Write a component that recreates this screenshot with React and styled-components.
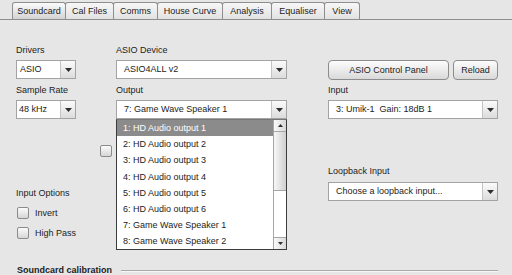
import React from 'react';
import styled, { createGlobalStyle } from 'styled-components';

const GlobalStyle = createGlobalStyle`
  html, body {
    margin: 0;
    padding: 0;
    background: #e6e6e6;
    overflow: hidden;
  }
  body {
    font-family: "Liberation Sans", Arial, sans-serif;
    font-size: 9px;
    color: #1c1c1c;
  }
`;

const Window = styled.div`
  width: 512px;
  height: 275px;
  background: #e6e6e6;
  overflow: hidden;
`;

const TabBar = styled.div`
  display: flex;
  align-items: flex-end;
  height: 17px;
  padding: 2px 0 0 12px;
  border-bottom: 1px solid #8e8e8e;
`;

const Tab = styled.div`
  box-sizing: border-box;
  width: ${p => p.$w}px;
  height: 17px;
  margin-right: -1px;
  border: 1px solid #8e8e8e;
  border-bottom: none;
  border-radius: 3px 3px 0 0;
  background: ${p => p.$active
    ? 'linear-gradient(#fbfbfb, #d3d3d3)'
    : 'linear-gradient(#f7f7f7, #e2e2e2)'};
  line-height: 16px;
  text-align: center;
  white-space: nowrap;
`;

const Panel = styled.div`
  padding: 0 14px 0 16px;
`;

const TopGrid = styled.div`
  display: grid;
  grid-template-columns: 100px 212px 170px;
  grid-template-rows: 11px 21px 11px 19px;
  row-gap: 4px;
  margin-top: 25px;
`;

const Label = styled.div`
  line-height: 11px;
  white-space: nowrap;
`;

const ComboBox = styled.div`
  box-sizing: border-box;
  position: relative;
  display: flex;
  width: ${p => p.$w}px;
  height: 19px;
  border: 1px solid #a3a3a3;
  background: #fff;
`;

const ComboText = styled.div`
  flex: 1;
  padding-left: ${p => p.$pad}px;
  line-height: 17px;
  white-space: pre;
  overflow: hidden;
`;

const ArrowBox = styled.div`
  display: flex;
  align-items: center;
  justify-content: center;
  width: 14px;
  border-left: 1px solid #c4c4c4;
  background: linear-gradient(#fbfbfb, #dcdcdc);
`;

const ButtonRow = styled.div`
  display: flex;
  gap: 4px;
`;

const Button = styled.div`
  box-sizing: border-box;
  width: ${p => p.$w}px;
  height: 20px;
  border: 1px solid #8c8c8c;
  border-radius: 4px;
  background: linear-gradient(#fdfdfd, #d9d9d9);
  line-height: 18px;
  text-align: center;
  white-space: nowrap;
`;

const FieldWrap = styled.div`
  position: relative;
  width: 171px;
`;

const Popup = styled.div`
  box-sizing: border-box;
  position: absolute;
  top: 19px;
  left: 0;
  z-index: 5;
  display: flex;
  width: 171px;
  height: 131px;
  border: 1px solid #3c3c3c;
  border-top-color: #777;
  background: #fff;
`;

const ItemList = styled.div`
  flex: 1;
`;

const Item = styled.div`
  height: 16.2px;
  padding-left: 6px;
  line-height: 16px;
  white-space: nowrap;
  background: ${p => (p.$selected ? '#8b8b8b' : 'transparent')};
  color: ${p => (p.$selected ? '#fff' : '#1c1c1c')};
`;

const ScrollBar = styled.div`
  display: flex;
  flex-direction: column;
  width: 12px;
  border-left: 1px solid #a6a6a6;
  background: #fff;
`;

const ScrollButton = styled.div`
  display: flex;
  align-items: center;
  justify-content: center;
  height: 11px;
  background: linear-gradient(90deg, #fafafa, #d8d8d8);
  border-bottom: ${p => (p.$up ? '1px solid #a6a6a6' : 'none')};
  border-top: ${p => (p.$up ? 'none' : '1px solid #a6a6a6')};
`;

const Track = styled.div`
  flex: 1;
  display: flex;
  flex-direction: column;
`;

const Thumb = styled.div`
  height: 58px;
  background: linear-gradient(90deg, #f7f7f7, #cfcfcf);
  border-bottom: 1px solid #a6a6a6;
`;

const Lower = styled.div`
  display: flex;
`;

const LeftCol = styled.div`
  display: flex;
  flex-direction: column;
  width: 312px;
`;

const RightCol = styled.div`
  display: flex;
  flex-direction: column;
  gap: 5px;
  width: 170px;
  padding-top: 47px;
`;

const CheckBox = styled.div`
  box-sizing: border-box;
  width: 12px;
  height: 12px;
  border: 1px solid #8c8c8c;
  border-radius: 2px;
  background: linear-gradient(#fbfbfb, #d6d6d6);
`;

const LoneCheck = styled.div`
  margin: 26px 0 0 84px;
`;

const OptionsLabel = styled(Label)`
  margin-top: 31px;
`;

const CheckRow = styled.div`
  display: flex;
  align-items: center;
  gap: 6px;
  margin: 8px 0 0 1px;
  line-height: 12px;
`;

const Section = styled.div`
  display: flex;
  align-items: center;
  gap: 9px;
  margin: 26px 0 0 1px;
  font-weight: bold;
  line-height: 11px;
  white-space: nowrap;
`;

const Rule = styled.div`
  flex: 1;
  height: 1px;
  background: #a9a9a9;
  box-shadow: 0 1px 0 #f6f6f6;
`;

const Tri = ({ up }) => (
  <svg width="7" height="4" viewBox="0 0 7 4">
    <polygon points={up ? '0,4 7,4 3.5,0' : '0,0 7,0 3.5,4'} fill="#2e2e2e" />
  </svg>
);

const SmallTri = ({ up }) => (
  <svg width="5" height="3" viewBox="0 0 5 3">
    <polygon points={up ? '0,3 5,3 2.5,0' : '0,0 5,0 2.5,3'} fill="#2e2e2e" />
  </svg>
);

const Combo = ({ w, pad = 7, value }) => (
  <ComboBox $w={w}>
    <ComboText $pad={pad}>{value}</ComboText>
    <ArrowBox><Tri /></ArrowBox>
  </ComboBox>
);

const tabs = [
  ['Soundcard', 54],
  ['Cal Files', 49],
  ['Comms', 45],
  ['House Curve', 66],
  ['Analysis', 50],
  ['Equaliser', 54],
  ['View', 36],
];

const outputs = [
  '1: HD Audio output 1',
  '2: HD Audio output 2',
  '3: HD Audio output 3',
  '4: HD Audio output 4',
  '5: HD Audio output 5',
  '6: HD Audio output 6',
  '7: Game Wave Speaker 1',
  '8: Game Wave Speaker 2',
];

export default function App() {
  return (
    <>
      <GlobalStyle />
      <Window>
        <TabBar>
          {tabs.map(([name, w], i) => (
            <Tab key={name} $w={w} $active={i === 0}>{name}</Tab>
          ))}
        </TabBar>
        <Panel>
          <TopGrid>
            <Label>Drivers</Label>
            <Label>ASIO Device</Label>
            <div />

            <Combo w={60} pad={3} value="ASIO" />
            <Combo w={171} value="ASIO4ALL v2" />
            <ButtonRow>
              <Button $w={121}>ASIO Control Panel</Button>
              <Button $w={45}>Reload</Button>
            </ButtonRow>

            <Label>Sample Rate</Label>
            <Label>Output</Label>
            <Label>Input</Label>

            <Combo w={60} pad={2} value="48 kHz" />
            <FieldWrap>
              <Combo w={171} value="7: Game Wave Speaker 1" />
              <Popup>
                <ItemList>
                  {outputs.map((o, i) => (
                    <Item key={o} $selected={i === 0}>{o}</Item>
                  ))}
                </ItemList>
                <ScrollBar>
                  <ScrollButton $up><SmallTri up /></ScrollButton>
                  <Track><Thumb /></Track>
                  <ScrollButton><SmallTri /></ScrollButton>
                </ScrollBar>
              </Popup>
            </FieldWrap>
            <Combo w={170} value="3: Umik-1  Gain: 18dB 1" />
          </TopGrid>

          <Lower>
            <LeftCol>
              <LoneCheck><CheckBox /></LoneCheck>
              <OptionsLabel>Input Options</OptionsLabel>
              <CheckRow><CheckBox />Invert</CheckRow>
              <CheckRow><CheckBox />High Pass</CheckRow>
            </LeftCol>
            <RightCol>
              <Label>Loopback Input</Label>
              <Combo w={170} value="Choose a loopback input..." />
            </RightCol>
          </Lower>

          <Section>
            Soundcard calibration
            <Rule />
          </Section>
        </Panel>
      </Window>
    </>
  );
}
